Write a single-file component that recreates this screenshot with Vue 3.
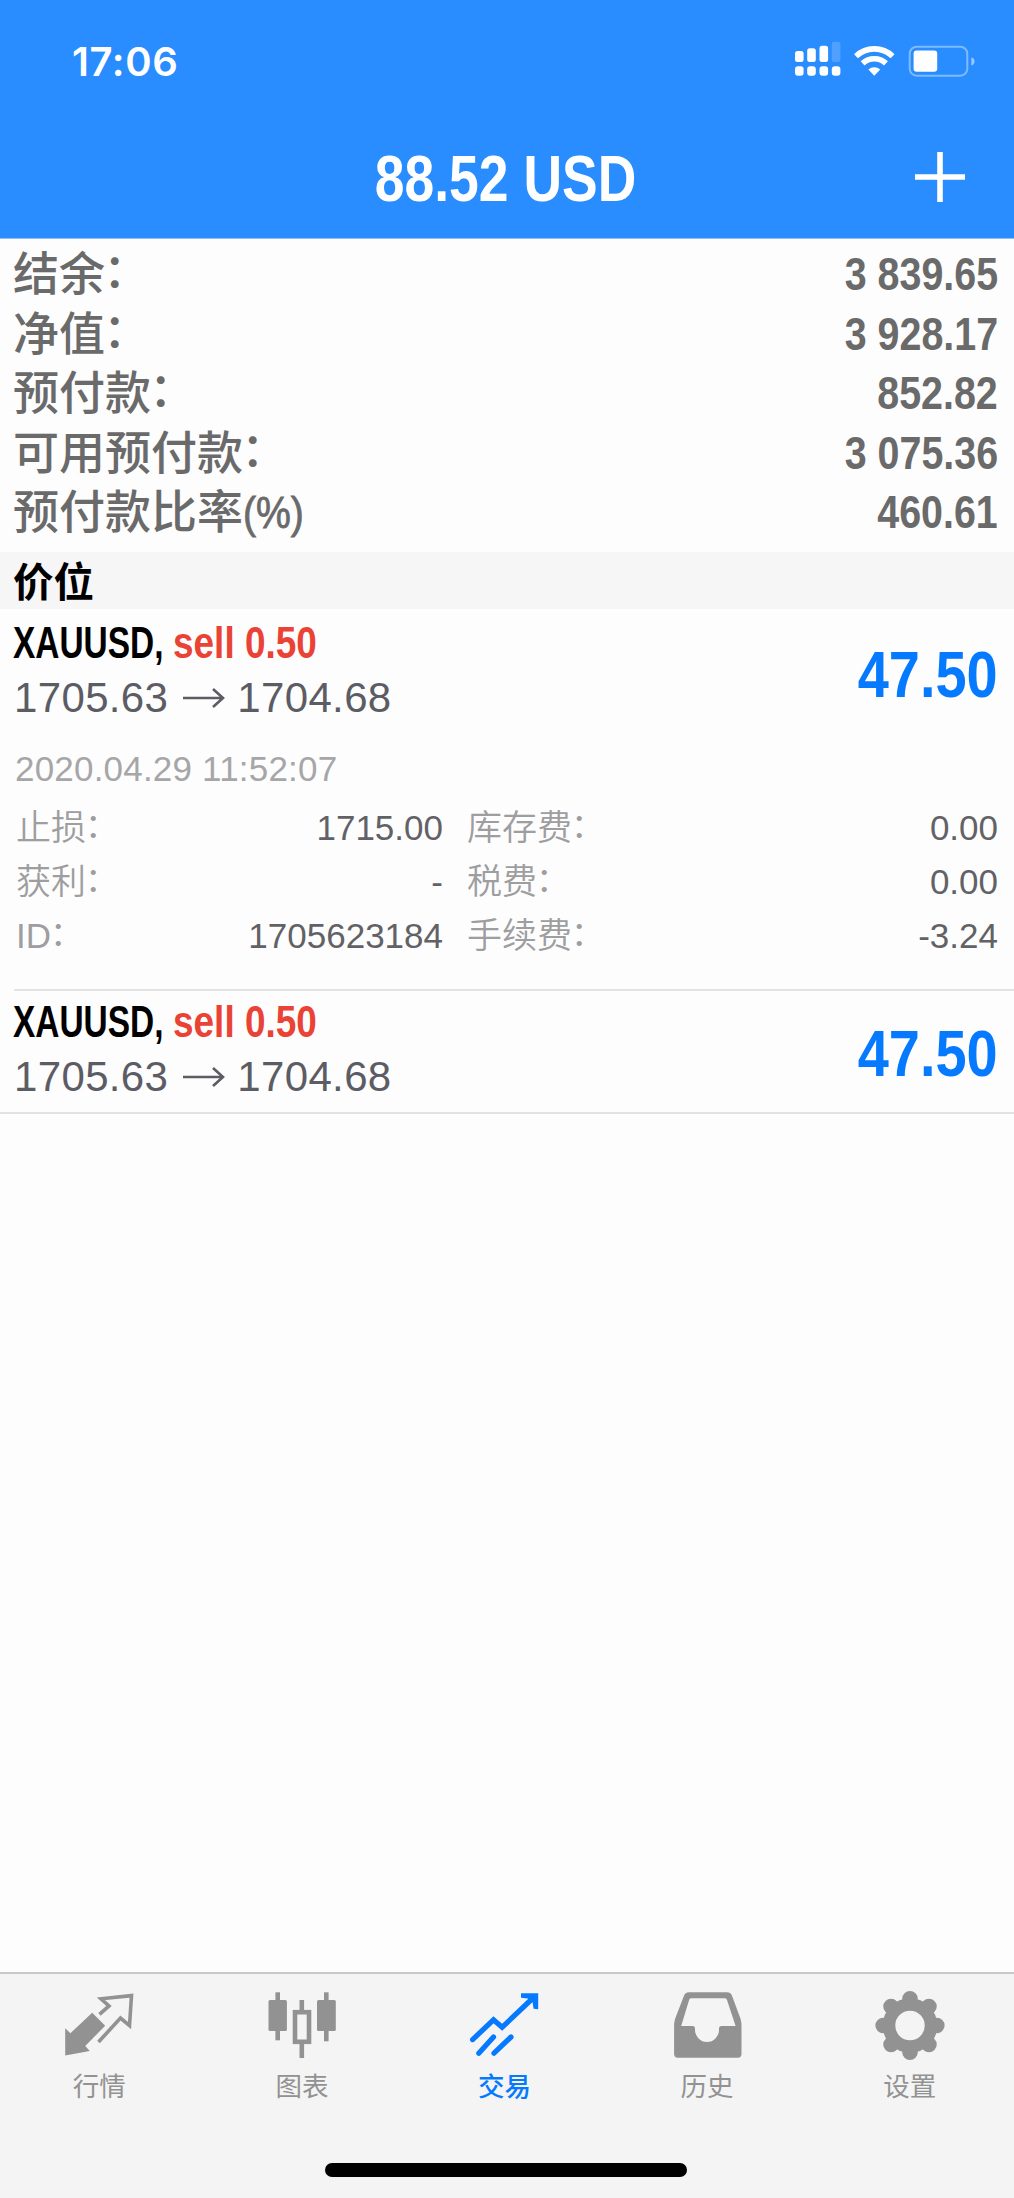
<script setup>
import { ref } from 'vue'

const summary = [
  { label: '结余', value: '3 839.65' },
  { label: '净值', value: '3 928.17' },
  { label: '预付款', value: '852.82' },
  { label: '可用预付款', value: '3 075.36' },
  { label: '预付款比率', suffix: '(%)', value: '460.61' },
]

const positions = ref([
  {
    key: 1,
    symbol: 'XAUUSD,',
    side: 'sell 0.50',
    open: '1705.63',
    current: '1704.68',
    profit: '47.50',
    expanded: true,
    time: '2020.04.29 11:52:07',
    details: [
      { label: '止损', value: '1715.00' },
      { label: '库存费', value: '0.00' },
      { label: '获利', value: '-' },
      { label: '税费', value: '0.00' },
      { label: 'ID', value: '1705623184' },
      { label: '手续费', value: '-3.24' },
    ],
  },
  {
    key: 2,
    symbol: 'XAUUSD,',
    side: 'sell 0.50',
    open: '1705.63',
    current: '1704.68',
    profit: '47.50',
    expanded: false,
  },
])

const tabs = [
  { id: 'quotes', label: '行情' },
  { id: 'chart', label: '图表' },
  { id: 'trade', label: '交易' },
  { id: 'history', label: '历史' },
  { id: 'settings', label: '设置' },
]
const activeTab = ref('trade')

const gearTeeth = Array.from({ length: 8 }, (_, i) => {
  const a = (i * Math.PI) / 4
  return { cx: 36 + 26.8 * Math.cos(a), cy: 35.5 + 26.8 * Math.sin(a) }
})

function toggle(p) {
  if (p.details) p.expanded = !p.expanded
}
</script>

<template>
  <div class="screen">
    <header class="header">
      <div class="status">
        <span class="clock">17:06</span>
        <svg class="status-icons" viewBox="790 40 190 40" fill="#fff">
          <g>
            <rect x="795" y="51" width="8.6" height="11" rx="2.5" />
            <rect x="807.2" y="48.3" width="8.6" height="13.7" rx="2.5" />
            <rect x="819.500" y="45.7" width="8.6" height="16.3" rx="2.5" />
            <rect x="831.8" y="41.7" width="8.6" height="20.3" rx="2" opacity="0.18" />
            <rect x="795" y="66.2" width="8.6" height="9.6" rx="3" />
            <rect x="807.2" y="66.2" width="8.6" height="9.6" rx="3" />
            <rect x="819.500" y="66.2" width="8.6" height="9.6" rx="3" />
            <rect x="831.8" y="66.2" width="8.6" height="9.6" rx="3" />
          </g>
          <g fill="none" stroke="#fff" stroke-width="5.6">
            <path d="M856 56.2a26.5 26.5 0 0 1 36.6 0" />
            <path d="M862.6 63.4a17 17 0 0 1 23.4 0" />
          </g>
          <path d="M868.4 69.6a8.5 8.5 0 0 1 11.8 0l-5.9 6.2z" />
          <rect x="909.7" y="46.7" width="57.6" height="29" rx="7" fill="none" stroke="#fff" stroke-width="2" opacity="0.4" />
          <rect x="913.6" y="50.6" width="23.6" height="21.2" rx="3" />
          <path d="M971.3 57.2c4.4 1.2 4.4 7 0 8.4z" opacity="0.5" />
        </svg>
      </div>
      <div class="nav">
        <h1 class="title condensed">88.52 USD</h1>
        <svg class="add" viewBox="0 0 50 50">
          <path d="M25 0v50M0 25h50" stroke="#fff" stroke-width="5.6" />
        </svg>
      </div>
    </header>

    <main class="content">
      <section class="summary">
        <div v-for="row in summary" :key="row.label" class="summary-row">
          <span class="summary-label">{{ row.label }}<span v-if="row.suffix" class="summary-suffix">{{ row.suffix }}</span><span v-else class="colon">：</span></span>
          <span class="summary-value condensed">{{ row.value }}</span>
        </div>
      </section>

      <h2 class="section-title">价位</h2>

      <ul class="positions">
        <li v-for="p in positions" :key="p.key" class="position" :class="{ expanded: p.expanded }" @click="toggle(p)">
          <div class="position-main">
            <div>
              <div class="position-name">
                <span class="symbol"><span class="condensed">{{ p.symbol }}</span></span>
                <span class="side condensed">{{ p.side }}</span>
              </div>
              <div class="position-price">
                <span>{{ p.open }}</span>
                <svg class="arrow" viewBox="0 0 42 20">
                  <path d="M0 10h40M30 1l10 9-10 9" fill="none" stroke="currentColor" stroke-width="2.6" />
                </svg>
                <span>{{ p.current }}</span>
              </div>
            </div>
            <span class="profit condensed">{{ p.profit }}</span>
          </div>
          <template v-if="p.expanded">
            <div class="time">{{ p.time }}</div>
            <div class="details">
              <div v-for="d in p.details" :key="d.label" class="detail">
                <span class="detail-label">{{ d.label }}<span class="colon">：</span></span>
                <span class="detail-value">{{ d.value }}</span>
              </div>
            </div>
          </template>
        </li>
      </ul>
    </main>

    <footer class="footer">
      <nav class="tabs">
        <a v-for="tab in tabs" :key="tab.id" class="tab" :class="{ active: tab.id === activeTab }" @click="activeTab = tab.id">
          <svg class="tab-icon" viewBox="0 0 72 72" fill="currentColor">
            <g v-if="tab.id === 'quotes'">
              <path d="M2.2 38.3l5.2 5L29.2 22.7l13 13L22.2 56l4.6 5-24.6 4.500z" />
              <path d="M36.5 24.3l9.500-8.4-8-7.1 30.5-3.2-2 30-9-7.6L35.5 52" fill="none" stroke="currentColor" stroke-width="3.6" />
            </g>
            <g v-else-if="tab.id === 'chart'">
              <rect x="9.4" y="2.3" width="4.6" height="48" />
              <rect x="2.5" y="10" width="18.4" height="31" rx="1.5" />
              <rect x="33.5" y="10" width="4.6" height="13" />
              <rect x="33.5" y="52" width="4.6" height="16" />
              <rect x="29" y="22.2" width="14" height="29.6" fill="none" stroke="currentColor" stroke-width="4.6" />
              <rect x="58" y="2.3" width="4.6" height="49" />
              <rect x="51" y="10" width="18.8" height="31" rx="1.5" />
            </g>
            <g v-else-if="tab.id === 'trade'">
              <g fill="none" stroke="currentColor" stroke-width="5.2" stroke-linecap="round">
                <path d="M4.6 49.6L25.5 29.8l8.6 7.5L65 8" stroke-linejoin="miter" />
                <path d="M25.5 47L10.8 63.2M43 47L26 63.2" />
              </g>
              <path d="M53 3.2h17.2v16l-4.6-.4-1-6.4-5-4-6.6-.6z" />
            </g>
            <path
              v-else-if="tab.id === 'history'"
              fill-rule="evenodd"
              d="M18 2.3h38q4 0 5.2 4L69.600 29q.9 3.6.9 7v28q0 3.7-3.7 3.7H6.800q-3.700 0-3.700-3.700V36q0-3.4.9-7L12.800 6.300q1.200-4 5.200-4zM20 8.300q-1.400 0-1.900 1.600L10.200 35.900h11.400q2.400 0 2.400 2.400v1.600a12 12 0 0 0 24 0v-1.600q0-2.400 2.400-2.400h14.200L56 9.900q-.6-1.600-2-1.600z"
            />
            <g v-else>
              <circle cx="36" cy="35.5" r="21" fill="none" stroke="currentColor" stroke-width="12.5" />
              <path
                v-for="(t, i) in gearTeeth"
                :key="i"
                :d="`M${t.cx - 7.8} ${t.cy}a7.8 7.8 0 1 0 15.6 0a7.8 7.8 0 1 0-15.6 0z`"
              />
            </g>
          </svg>
          <span class="tab-label">{{ tab.label }}</span>
        </a>
      </nav>
      <div class="home-indicator" />
    </footer>
  </div>
</template>

<style>
body {
  margin: 0;
  background: #fdfdfd;
}
</style>

<style scoped>
.screen {
  display: flex;
  flex-direction: column;
  width: 1014px;
  height: 2198px;
  overflow: hidden;
  background: #fdfdfd;
  font-family: "Liberation Sans", "Noto Sans CJK SC", sans-serif;
}

.condensed {
  display: inline-block;
  font-family: "Liberation Sans", sans-serif;
  font-weight: 700;
  white-space: nowrap;
}
.colon {
  display: inline-block;
  transform: translate(-0.04em, -0.07em);
}

.header {
  height: 238px;
  flex: none;
  background: #298cff;
  border-bottom: 1px solid #8fbcf5;
  color: #fff;
}
.status {
  display: flex;
  justify-content: space-between;
  height: 80px;
  padding: 40px 34px 0 72px;
  box-sizing: border-box;
}
.clock {
  font: 600 40px/43px Inter, sans-serif;
  letter-spacing: 0.6px;
}
.status-icons {
  width: 190px;
  height: 40px;
}
.nav {
  display: grid;
  grid-template-columns: 1fr auto 1fr;
  align-items: center;
  height: 118px;
  margin-top: 38px;
  padding: 0 49px 0 46px;
  box-sizing: border-box;
}
.title {
  grid-column: 2;
  margin: 2px 0 0;
  font-size: 64px;
  line-height: 118px;
  transform: scaleX(0.835);
}
.add {
  justify-self: end;
  width: 50px;
  height: 50px;
  margin-bottom: 2px;
}

.content {
  flex: 1;
}
.summary {
  height: 313px;
  padding: 4px 16px 0 13px;
  box-sizing: border-box;
  color: #6a6a6a;
}
.summary-row {
  display: flex;
  justify-content: space-between;
  height: 59.6px;
  font-size: 46px;
}
.summary-label {
  font-family: "Noto Sans CJK SC", sans-serif;
  font-weight: 500;
  line-height: 55.6px;
}
.summary-suffix {
  display: inline-block;
  font-family: "Liberation Sans", sans-serif;
  font-size: 44px;
  -webkit-text-stroke: 0.8px currentColor;
  transform: scaleX(0.89);
  transform-origin: left;
}
.summary-value {
  line-height: 62px;
  transform: scaleX(0.856);
  transform-origin: right;
}

.section-title {
  height: 57px;
  margin: 0;
  padding-left: 13px;
  background: #f6f6f6;
  color: #000;
  font: 700 40.5px/56px "Noto Sans CJK SC", sans-serif;
}

.positions {
  margin: 0;
  padding: 3px 0 0;
  list-style: none;
  border-bottom: 2px solid #e2e2e2;
}
.position {
  padding: 2px 16px 7px 14px;
}
.position.expanded {
  padding-bottom: 0;
}
.position-main {
  display: flex;
  justify-content: space-between;
}
.position-name {
  display: flex;
  height: 56px;
  font-size: 44px;
  line-height: 57px;
}
.symbol {
  width: 159px;
  color: #000;
}
.symbol .condensed {
  margin-left: -1px;
  transform: scaleX(0.76);
  transform-origin: left;
}
.side {
  color: #ea4335;
  transform: scaleX(0.84);
  transform-origin: left;
}
.position-price {
  display: flex;
  align-items: center;
  height: 56px;
  color: #5c5c64;
  font-size: 42px;
  letter-spacing: 0.35px;
}
.arrow {
  width: 42px;
  height: 20px;
  margin: 0 12px 0 15px;
}
.profit {
  margin-top: 10px;
  color: #067aff;
  font-size: 65px;
  line-height: 102px;
  transform: scaleX(0.86);
  transform-origin: right;
}
.time {
  height: 46px;
  margin-top: 20px;
  padding-left: 1px;
  color: #a6a6a8;
  font-size: 35px;
  line-height: 46px;
  letter-spacing: 0.2px;
}
.details {
  display: grid;
  grid-template-columns: 427px 1fr;
  column-gap: 24px;
  margin-top: 9px;
  padding: 0 0 26px 2px;
}
.position.expanded::after {
  content: "";
  display: block;
  height: 2px;
  margin-right: -16px;
  background: #e2e2e2;
}
.detail {
  display: flex;
  justify-content: space-between;
  height: 54px;
  line-height: 54px;
  font-size: 35px;
}
.detail-label {
  color: #9e9ea0;
  font-weight: 350;
}
.detail-value {
  color: #626266;
}

.footer {
  display: flex;
  flex-direction: column;
  align-items: center;
  flex: none;
  height: 226px;
  box-sizing: border-box;
  border-top: 2px solid #c9c9c9;
  background: #f4f4f4;
}
.tabs {
  display: grid;
  grid-template-columns: repeat(5, 1fr);
  align-self: flex-start;
  width: 1013px;
  height: 189px;
  margin-left: -2px;
  padding-top: 16px;
  box-sizing: border-box;
}
.tab {
  display: flex;
  flex-direction: column;
  align-items: center;
  color: #929292;
}
.tab.active {
  color: #067aff;
}
.tab-icon {
  width: 72px;
  height: 72px;
}
.tab-label {
  margin-top: 4px;
  font: 400 26.5px/37px "Noto Sans CJK SC", sans-serif;
}
.tab.active .tab-label {
  font-weight: 500;
}
.home-indicator {
  width: 362px;
  height: 14px;
  margin-right: 2px;
  border-radius: 7px;
  background: #000;
}
</style>
